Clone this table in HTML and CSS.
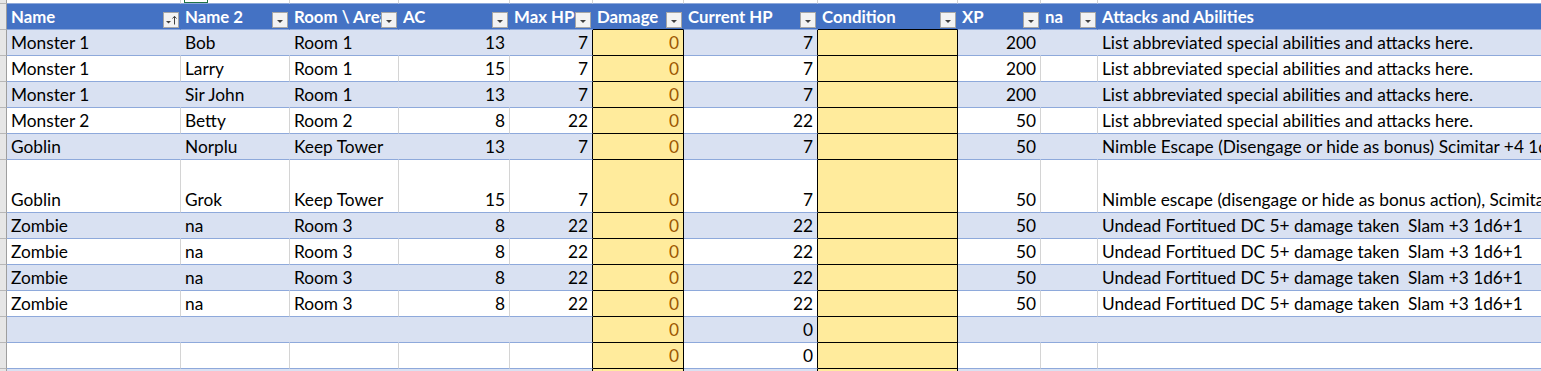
FILE: index.html
```html
<!DOCTYPE html>
<html>
<head>
<meta charset="utf-8">
<title>Encounter tracker</title>
<link rel="stylesheet" href="styles.css">
</head>
<body>
<div class="sheet">
  <div class="row strip">
    <div class="c rh"></div>
    <div class="c"></div>
    <div class="c"><span class="sel"></span></div>
    <div class="c"></div><div class="c"></div><div class="c"></div><div class="c"></div>
    <div class="c"></div><div class="c"></div><div class="c"></div><div class="c"></div><div class="c"></div>
  </div>

  <div class="row head">
    <div class="c rh"></div>
    <div class="c"><span class="t">Name</span><span class="fb"><svg width="14" height="14" viewBox="0 0 14 14"><path d="M2 8h5l-2.5 2.5z" fill="#404040"/><path d="M10.5 3.5v8" stroke="#404040" stroke-width="1"/><path d="M8.5 5.5l2-2.2 2 2.2" fill="none" stroke="#404040" stroke-width="1"/></svg></span></div>
    <div class="c"><span class="t">Name 2</span><span class="fb"><svg width="14" height="14" viewBox="0 0 14 14"><path d="M4 7h6l-3 3z" fill="#404040"/></svg></span></div>
    <div class="c"><span class="t">Room \ Area</span><span class="fb"><svg width="14" height="14" viewBox="0 0 14 14"><path d="M4 7h6l-3 3z" fill="#404040"/></svg></span></div>
    <div class="c"><span class="t">AC</span><span class="fb"><svg width="14" height="14" viewBox="0 0 14 14"><path d="M4 7h6l-3 3z" fill="#404040"/></svg></span></div>
    <div class="c"><span class="t">Max HP</span><span class="fb"><svg width="14" height="14" viewBox="0 0 14 14"><path d="M4 7h6l-3 3z" fill="#404040"/></svg></span></div>
    <div class="c yb"><span class="t">Damage</span><span class="fb"><svg width="14" height="14" viewBox="0 0 14 14"><path d="M4 7h6l-3 3z" fill="#404040"/></svg></span></div>
    <div class="c"><span class="t">Current HP</span><span class="fb"><svg width="14" height="14" viewBox="0 0 14 14"><path d="M4 7h6l-3 3z" fill="#404040"/></svg></span></div>
    <div class="c yb"><span class="t">Condition</span><span class="fb"><svg width="14" height="14" viewBox="0 0 14 14"><path d="M4 7h6l-3 3z" fill="#404040"/></svg></span></div>
    <div class="c"><span class="t">XP</span><span class="fb"><svg width="14" height="14" viewBox="0 0 14 14"><path d="M4 7h6l-3 3z" fill="#404040"/></svg></span></div>
    <div class="c"><span class="t">na</span><span class="fb"><svg width="14" height="14" viewBox="0 0 14 14"><path d="M4 7h6l-3 3z" fill="#404040"/></svg></span></div>
    <div class="c"><span class="t">Attacks and Abilities</span></div>
  </div>

  <div class="row band">
    <div class="c rh"></div><div class="c">Monster 1</div><div class="c">Bob</div><div class="c">Room 1</div>
    <div class="c n">13</div><div class="c n kb">7</div><div class="c n y">0</div><div class="c n kb">7</div><div class="c y"></div>
    <div class="c n">200</div><div class="c"></div><div class="c">List abbreviated special abilities and attacks here.</div>
  </div>
  <div class="row">
    <div class="c rh"></div><div class="c">Monster 1</div><div class="c">Larry</div><div class="c">Room 1</div>
    <div class="c n">15</div><div class="c n kb">7</div><div class="c n y">0</div><div class="c n kb">7</div><div class="c y"></div>
    <div class="c n">200</div><div class="c"></div><div class="c">List abbreviated special abilities and attacks here.</div>
  </div>
  <div class="row band">
    <div class="c rh"></div><div class="c">Monster 1</div><div class="c">Sir John</div><div class="c">Room 1</div>
    <div class="c n">13</div><div class="c n kb">7</div><div class="c n y">0</div><div class="c n kb">7</div><div class="c y"></div>
    <div class="c n">200</div><div class="c"></div><div class="c">List abbreviated special abilities and attacks here.</div>
  </div>
  <div class="row">
    <div class="c rh"></div><div class="c">Monster 2</div><div class="c">Betty</div><div class="c">Room 2</div>
    <div class="c n">8</div><div class="c n kb">22</div><div class="c n y">0</div><div class="c n kb">22</div><div class="c y"></div>
    <div class="c n">50</div><div class="c"></div><div class="c">List abbreviated special abilities and attacks here.</div>
  </div>
  <div class="row band">
    <div class="c rh"></div><div class="c">Goblin</div><div class="c">Norplu</div><div class="c">Keep Tower</div>
    <div class="c n">13</div><div class="c n kb">7</div><div class="c n y">0</div><div class="c n kb">7</div><div class="c y"></div>
    <div class="c n">50</div><div class="c"></div><div class="c">Nimble Escape (Disengage or hide as bonus) Scimitar +4 1d6+2 slashing</div>
  </div>
  <div class="row tall">
    <div class="c rh"></div><div class="c">Goblin</div><div class="c">Grok</div><div class="c">Keep Tower</div>
    <div class="c n">15</div><div class="c n kb">7</div><div class="c n y">0</div><div class="c n kb">7</div><div class="c y"></div>
    <div class="c n">50</div><div class="c"></div><div class="c">Nimble escape (disengage or hide as bonus action), Scimitar +4 1d6+2</div>
  </div>
  <div class="row band">
    <div class="c rh"></div><div class="c">Zombie</div><div class="c">na</div><div class="c">Room 3</div>
    <div class="c n">8</div><div class="c n kb">22</div><div class="c n y">0</div><div class="c n kb">22</div><div class="c y"></div>
    <div class="c n">50</div><div class="c"></div><div class="c pre">Undead Fortitued DC 5+ damage taken  Slam +3 1d6+1</div>
  </div>
  <div class="row">
    <div class="c rh"></div><div class="c">Zombie</div><div class="c">na</div><div class="c">Room 3</div>
    <div class="c n">8</div><div class="c n kb">22</div><div class="c n y">0</div><div class="c n kb">22</div><div class="c y"></div>
    <div class="c n">50</div><div class="c"></div><div class="c pre">Undead Fortitued DC 5+ damage taken  Slam +3 1d6+1</div>
  </div>
  <div class="row band">
    <div class="c rh"></div><div class="c">Zombie</div><div class="c">na</div><div class="c">Room 3</div>
    <div class="c n">8</div><div class="c n kb">22</div><div class="c n y">0</div><div class="c n kb">22</div><div class="c y"></div>
    <div class="c n">50</div><div class="c"></div><div class="c pre">Undead Fortitued DC 5+ damage taken  Slam +3 1d6+1</div>
  </div>
  <div class="row">
    <div class="c rh"></div><div class="c">Zombie</div><div class="c">na</div><div class="c">Room 3</div>
    <div class="c n">8</div><div class="c n kb">22</div><div class="c n y">0</div><div class="c n kb">22</div><div class="c y"></div>
    <div class="c n">50</div><div class="c"></div><div class="c pre">Undead Fortitued DC 5+ damage taken  Slam +3 1d6+1</div>
  </div>
  <div class="row band">
    <div class="c rh"></div><div class="c"></div><div class="c"></div><div class="c"></div>
    <div class="c n"></div><div class="c n kb"></div><div class="c n y">0</div><div class="c n kb">0</div><div class="c y"></div>
    <div class="c n"></div><div class="c"></div><div class="c"></div>
  </div>
  <div class="row">
    <div class="c rh"></div><div class="c"></div><div class="c"></div><div class="c"></div>
    <div class="c n"></div><div class="c n kb"></div><div class="c n y">0</div><div class="c n kb">0</div><div class="c y"></div>
    <div class="c n"></div><div class="c"></div><div class="c"></div>
  </div>
  <div class="row band">
    <div class="c rh"></div><div class="c"></div><div class="c"></div><div class="c"></div>
    <div class="c n"></div><div class="c n kb"></div><div class="c n y">0</div><div class="c n kb">0</div><div class="c y"></div>
    <div class="c n"></div><div class="c"></div><div class="c"></div>
  </div>
</div>
</body>
</html>
```

FILE: styles.css
```css
html, body {
  margin: 0;
  padding: 0;
  background: #ffffff;
  overflow: hidden;
}

body {
  font-family: Lato, "Noto Sans", sans-serif;
  font-size: 17.3px;
  color: #000000;
}

.sheet {
  display: flex;
  flex-direction: column;
  width: 1800px;
}

.row {
  display: grid;
  grid-template-columns: 7px 174px 109px 109px 111px 83px 91px 134px 140px 83px 57px 702px;
  height: 26px;
}

.row.tall {
  height: 53px;
}

.row.strip {
  height: 4px;
}

.c {
  box-sizing: border-box;
  min-width: 0;
  display: flex;
  align-items: flex-end;
  padding: 0 4px;
  line-height: 25px;
  white-space: nowrap;
  overflow: hidden;
  border-right: 1px solid #d4d4d4;
  border-bottom: 1px solid #8ea9db;
}

.c.n {
  justify-content: flex-end;
}

.c.pre {
  white-space: pre;
}

.band .c {
  background: #d9e1f2;
  border-right-color: #d9e1f2;
}

.row .kb {
  border-right-color: #000000;
}

.row .y {
  background: #ffeb9c;
  color: #9c5700;
  border-right-color: #000000;
  border-bottom-color: #000000;
}

/* top partial row */
.strip .c {
  padding: 0;
  align-items: flex-start;
}

.sel {
  box-sizing: border-box;
  width: 24px;
  height: 3px;
  margin-left: 3px;
  border: 1px solid #217346;
  border-top: none;
}

/* header row */
.head .c {
  background: #4472c4;
  border-right-color: #4472c4;
  color: #ffffff;
  font-weight: 700;
  font-size: 16.8px;
  padding: 0 1px 0 4px;
}

.head .yb {
  border-bottom-color: #000000;
}

.t {
  flex: 1 1 auto;
  min-width: 0;
  overflow: hidden;
}

.fb {
  box-sizing: border-box;
  flex: none;
  width: 16px;
  height: 16px;
  margin-bottom: 1px;
  border: 1px solid #a6a6a6;
  background: #f3f3f3;
  display: flex;
  align-items: center;
  justify-content: center;
}

.fb svg {
  display: block;
}

/* row header gutter */
.row .rh {
  padding: 0;
  background: #e6e6e6;
  border-right: 1px solid #9e9e9e;
  border-bottom: 1px solid #b7b7b7;
}
```
